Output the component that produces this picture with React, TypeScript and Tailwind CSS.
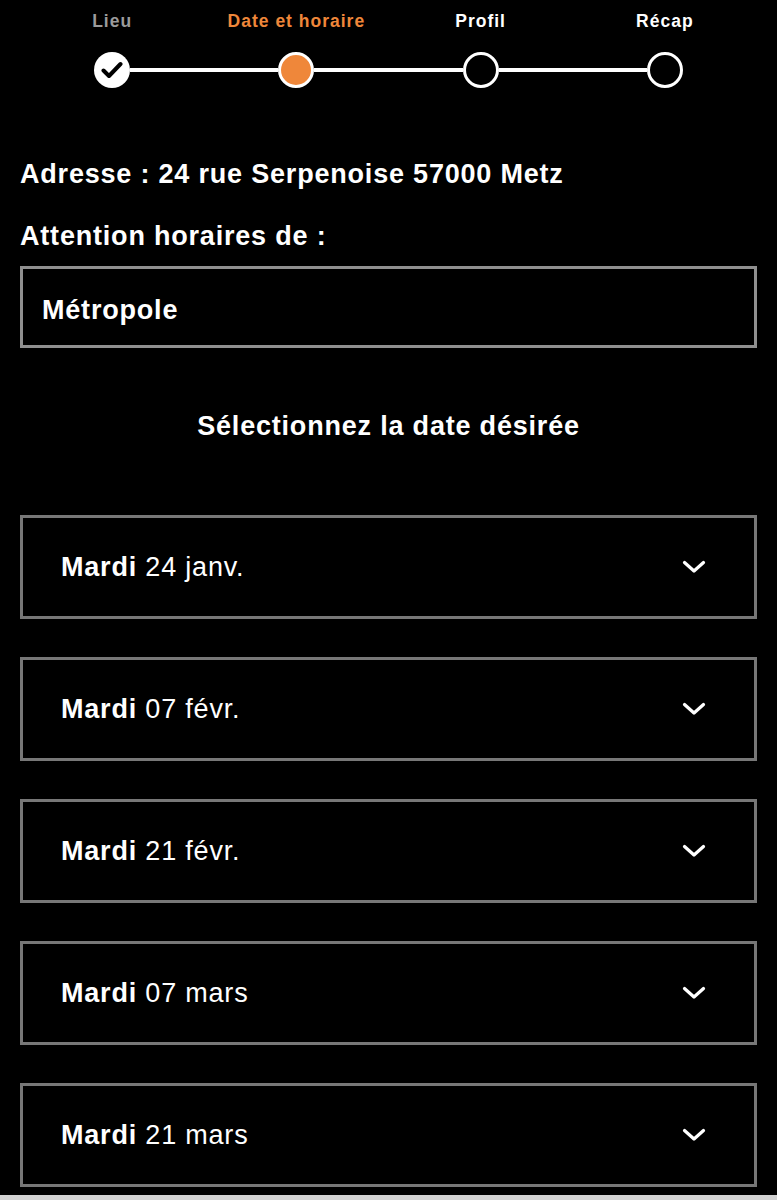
import React from 'react';

const STEPS = [
  { label: 'Lieu', state: 'done' },
  { label: 'Date et horaire', state: 'current' },
  { label: 'Profil', state: 'todo' },
  { label: 'Récap', state: 'todo' },
] as const;

const DATES = [
  { day: 'Mardi', date: '24 janv.' },
  { day: 'Mardi', date: '07 févr.' },
  { day: 'Mardi', date: '21 févr.' },
  { day: 'Mardi', date: '07 mars' },
  { day: 'Mardi', date: '21 mars' },
];

function StepDot({ state }: { state: string }) {
  if (state === 'done') {
    return (
      <div className="flex h-[36px] w-[36px] shrink-0 items-center justify-center rounded-full bg-white">
        <svg width="22" height="18" viewBox="0 0 22 18" fill="none">
          <path d="M2.5 9.5 L8 15 L19.5 3" stroke="black" strokeWidth="4" strokeLinecap="round" strokeLinejoin="round" />
        </svg>
      </div>
    );
  }
  if (state === 'current') {
    return <div className="h-[36px] w-[36px] shrink-0 rounded-full border-[3px] border-white bg-[#ef873a]" />;
  }
  return <div className="h-[36px] w-[36px] shrink-0 rounded-full border-[3px] border-white bg-black" />;
}

function Chevron() {
  return (
    <svg width="24" height="14" viewBox="0 0 24 14" fill="none">
      <path d="M2.5 2.5 L12 11 L21.5 2.5" stroke="white" strokeWidth="3.2" strokeLinecap="round" strokeLinejoin="round" />
    </svg>
  );
}

export default function App() {
  return (
    <div className="bg-black font-['Liberation_Sans',Arial,sans-serif] text-white">
      <div className="px-5 pt-[11px] pb-[8px]">
        <div className="grid grid-cols-4">
          {STEPS.map((s, i) => (
            <div key={s.label} className="flex flex-col items-center">
              <p
                className={`text-[17.5px] font-bold leading-[20px] tracking-[1px] ${
                  s.state === 'done' ? 'text-[#9b9b9b]' : s.state === 'current' ? 'text-[#ef873a]' : 'text-white'
                }`}
              >
                {s.label}
              </p>
              <div className="mt-[21px] flex w-full items-center">
                <div className={`h-[4px] flex-1 ${i === 0 ? '' : 'bg-white'}`} />
                <StepDot state={s.state} />
                <div className={`h-[4px] flex-1 ${i === STEPS.length - 1 ? '' : 'bg-white'}`} />
              </div>
            </div>
          ))}
        </div>

        <h2 className="mt-[71px] text-[27px] font-bold leading-[30px] tracking-[0.8px]">
          Adresse : 24 rue Serpenoise 57000 Metz
        </h2>
        <h2 className="mt-[32px] text-[27px] font-bold leading-[30px] tracking-[0.8px]">Attention horaires de :</h2>

        <div className="mt-[15px] flex h-[82px] items-center border-[3px] border-[#8f8f8f] pl-[19px] pt-[6px]">
          <span className="text-[27px] font-bold leading-[30px] tracking-[0.8px]">Métropole</span>
        </div>

        <h3 className="mt-[63px] text-center text-[27px] font-bold leading-[30px] tracking-[0.8px]">
          Sélectionnez la date désirée
        </h3>

        <div className="mt-[74px] flex flex-col gap-[38px]">
          {DATES.map((d) => (
            <button
              key={d.date}
              className="flex h-[104px] items-center justify-between border-[3px] border-[#777777] pl-[38px] pr-[48px] text-left"
            >
              <span className="text-[27px] leading-[30px] tracking-[0.8px]">
                <span className="font-bold">{d.day}</span> {d.date}
              </span>
              <Chevron />
            </button>
          ))}
        </div>
      </div>
      <div className="h-[5px] bg-[#d2d2d2]" />
    </div>
  );
}
